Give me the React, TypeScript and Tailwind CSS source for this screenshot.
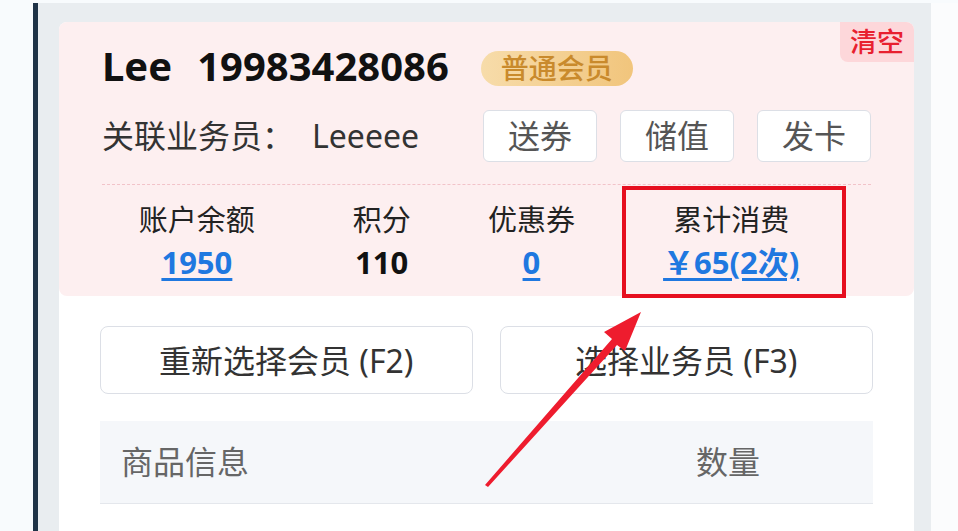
const font = { fontFamily: '"Noto Sans", "Noto Sans CJK SC", sans-serif' };

const actions = ["送券", "储值", "发卡"];

const stats = [
  { label: "账户余额", value: "1950", link: true, width: "w-[190px]" },
  { label: "积分", value: "110", link: false, width: "w-[180px]" },
  { label: "优惠券", value: "0", link: true, width: "w-[120px]" },
  { label: "累计消费", value: "￥65(2次)", link: true, width: "w-[280px]" },
];

function Arrow() {
  return (
    <svg
      className="pointer-events-none absolute left-0 top-0"
      width="958"
      height="531"
      viewBox="0 0 958 531"
    >
      <polygon
        points="485,485 612,339 604,332 641,312 625,351 617,345 488,487"
        fill="#ee1c2e"
      />
    </svg>
  );
}

export default function App() {
  return (
    <div
      className="relative flex h-[531px] w-[958px] overflow-hidden bg-[#f8fbfd] pt-[3px]"
      style={font}
    >
      <div className="w-[33px] shrink-0" />
      <div className="w-[5px] shrink-0 bg-[#1f3347]" />
      <div className="w-[893px] shrink-0 bg-[#e9edf0] pl-[21px] pr-[17px] pt-[19px]">
        <div className="h-full rounded-t-lg bg-white">
          {/* member info */}
          <div className="relative rounded-lg bg-[#fdeff0] pb-[14px] pl-[43px] pr-[43px] pt-[19px]">
            <div className="absolute right-0 top-0 rounded-bl-lg rounded-tr-lg bg-[#fdd7da] px-[10px] py-[3px] text-[27px] font-medium leading-[34px] text-[#e8202f]">
              清空
            </div>
            <div className="flex h-[50px] items-center">
              <span className="text-[40px] font-bold leading-[50px] text-[#111]">Lee</span>
              <span className="ml-[25px] text-[40px] font-bold leading-[50px] text-[#111]">
                19983428086
              </span>
              <span className="ml-[32px] mt-[4px] rounded-full bg-gradient-to-r from-[#f7dcaa] to-[#f1c57c] px-[20px] text-[28px] font-medium leading-[35px] text-[#c98a2c]">
                普通会员
              </span>
            </div>
            <div className="mt-[19px] flex items-center">
              <span className="text-[32px] leading-[52px] text-[#333]">关联业务员：</span>
              <span className="ml-[18px] text-[32px] leading-[52px] text-[#333]">Leeeee</span>
              <div className="ml-auto flex gap-[23px]">
                {actions.map((a) => (
                  <button
                    key={a}
                    className="h-[52px] w-[114px] rounded-md border border-[#dcdfe6] bg-white text-[32px] text-[#555]"
                  >
                    {a}
                  </button>
                ))}
              </div>
            </div>
            <div className="mt-[22px] border-t border-dashed border-[#f2c3c9]" />
            <div className="mt-[17px] flex">
              {stats.map((s) => (
                <div key={s.label} className={`${s.width} flex flex-col items-center`}>
                  <span className="text-[29px] leading-[36px] text-[#222]">{s.label}</span>
                  <span
                    className={
                      s.link
                        ? "mt-[4px] text-[31px] font-bold leading-[40px] text-[#1f78e0] underline underline-offset-4"
                        : "mt-[4px] text-[31px] font-bold leading-[40px] text-[#111]"
                    }
                  >
                    {s.value}
                  </span>
                </div>
              ))}
            </div>
          </div>

          {/* actions */}
          <div className="mt-[30px] flex gap-[27px] px-[41px]">
            <button className="h-[68px] w-[373px] rounded-lg border border-[#dcdfe6] bg-white pt-[2px] text-[32px] text-[#333]">
              重新选择会员 (F2)
            </button>
            <button className="h-[68px] w-[374px] rounded-lg border border-[#dcdfe6] bg-white pt-[2px] text-[32px] text-[#333]">
              选择业务员 (F3)
            </button>
          </div>

          {/* goods table */}
          <div className="mx-[41px] mt-[27px] flex h-[83px] items-center border-b border-[#e4e7ec] bg-[#f5f7fa] pl-[21px]">
            <span className="text-[32px] text-[#666]">商品信息</span>
            <span className="ml-[447px] text-[32px] text-[#666]">数量</span>
          </div>
        </div>
      </div>
      <div className="flex-1 bg-[#fbfcfd]" />

      {/* annotation */}
      <div className="pointer-events-none absolute left-[622px] top-[186px] h-[112px] w-[224px] border-4 border-[#e60f1f]" />
      <Arrow />
    </div>
  );
}
